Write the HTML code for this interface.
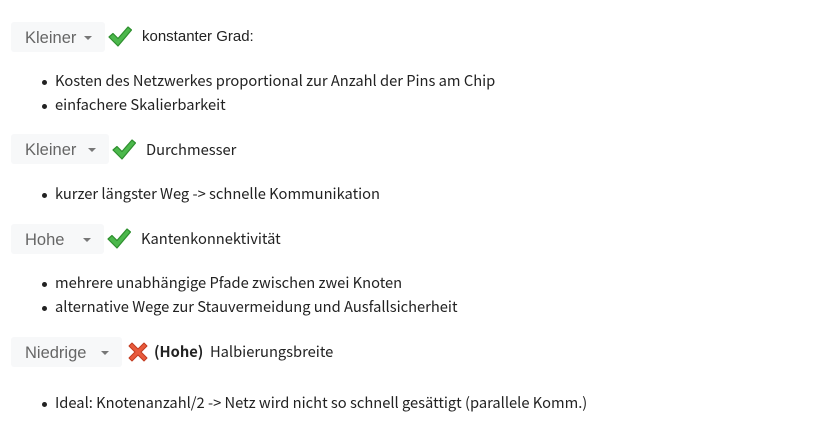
<!DOCTYPE html>
<html><head><meta charset="utf-8"><style>
body{margin:0;width:818px;height:445px;background:#fff;position:relative;overflow:hidden}
.dd{position:absolute;left:11px;height:30px;background:#f7f8f9;border-radius:3px;font:16.5px "Liberation Sans",sans-serif;color:#666;line-height:32px;padding-left:14px;box-sizing:border-box}
.dd:after{content:"";position:absolute;right:13px;top:14px;border-left:4px solid transparent;border-right:4px solid transparent;border-top:4px solid #777}
.ic{position:absolute;width:24px;height:24px}
.t{position:absolute;font:15px "Liberation Sans",sans-serif;color:#222;white-space:nowrap}
.b{position:absolute;left:42px;font:14.7px "Noto Sans CJK SC","Liberation Sans",sans-serif;color:#222;white-space:nowrap;line-height:20px}
.b:before{content:"";position:absolute;left:0;top:9px;width:5px;height:5px;border-radius:50%;background:#222}
.b span{margin-left:13px}
.h{font-family:"Noto Sans CJK SC","Liberation Sans",sans-serif;font-size:14.7px}
</style></head><body>
<div class="dd" style="top:22px;width:94px">Kleiner</div>
<svg class="ic" style="left:108px;top:25px" viewBox="0 0 24 24"><path d="M1 12 L5 8.5 L10 13.5 L20 2 L23.5 5 L10 21 Z" fill="#4cb84c" stroke="#2e8f2e" stroke-width="1.2" stroke-linejoin="round"/></svg>
<div class="t" style="left:142px;top:28px">konstanter Grad:</div>
<div class="b" style="top:71px"><span>Kosten des Netzwerkes proportional zur Anzahl der Pins am Chip</span></div>
<div class="b" style="top:95px"><span>einfachere Skalierbarkeit</span></div>

<div class="dd" style="top:134px;width:98px">Kleiner</div>
<svg class="ic" style="left:112px;top:138px" viewBox="0 0 24 24"><path d="M1 12 L5 8.5 L10 13.5 L20 2 L23.5 5 L10 21 Z" fill="#4cb84c" stroke="#2e8f2e" stroke-width="1.2" stroke-linejoin="round"/></svg>
<div class="t h" style="left:146px;top:139px">Durchmesser</div>
<div class="b" style="top:184px"><span>kurzer längster Weg -&gt; schnelle Kommunikation</span></div>

<div class="dd" style="top:224px;width:93px">Hohe</div>
<svg class="ic" style="left:107px;top:227px" viewBox="0 0 24 24"><path d="M1 12 L5 8.5 L10 13.5 L20 2 L23.5 5 L10 21 Z" fill="#4cb84c" stroke="#2e8f2e" stroke-width="1.2" stroke-linejoin="round"/></svg>
<div class="t h" style="left:141px;top:228px">Kantenkonnektivität</div>
<div class="b" style="top:273px"><span>mehrere unabhängige Pfade zwischen zwei Knoten</span></div>
<div class="b" style="top:297px"><span>alternative Wege zur Stauvermeidung und Ausfallsicherheit</span></div>

<div class="dd" style="top:337px;width:111px">Niedrige</div>
<svg class="ic" style="left:126px;top:340px" viewBox="0 0 24 24"><path d="M3 6 L6 3 L12 9 L18 3 L21 6 L15 12 L21 18 L18 21 L12 15 L6 21 L3 18 L9 12 Z" fill="#e85a3c" stroke="#c23a20" stroke-width="1" stroke-linejoin="round"/></svg>
<div class="t h" style="left:154px;top:341px"><b>(Hohe)</b>&nbsp; Halbierungsbreite</div>
<div class="b" style="top:393px"><span>Ideal: Knotenanzahl/2 -&gt; Netz wird nicht so schnell gesättigt (parallele Komm.)</span></div>
</body></html>
